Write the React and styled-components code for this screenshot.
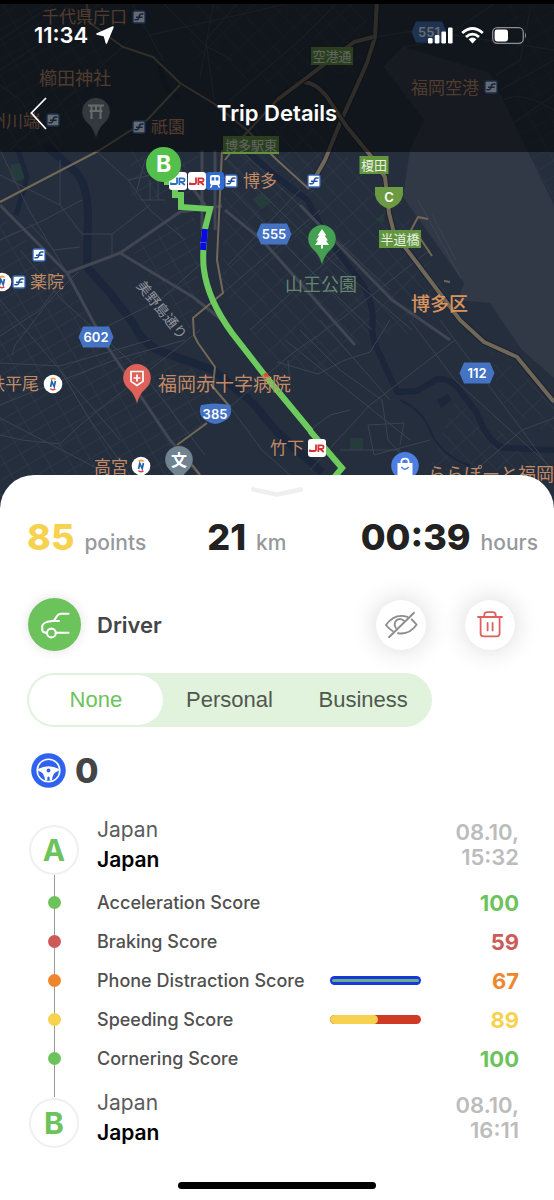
import React, { useState } from "react";
import styled, { createGlobalStyle } from "styled-components";

const colors = {
  green: "#6cc35b",
  red: "#cd5a57",
  orange: "#ef862d",
  yellow: "#f6d24f",
  blue: "#2f62ee",
  text: "#444546",
  muted: "#96999c",
  date: "#bcbcbc",
};

const mapFont = '"Noto Sans CJK JP", sans-serif';

const GlobalStyle = createGlobalStyle`
  * {
    box-sizing: border-box;
  }
  body {
    margin: 0;
    background: #fff;
    font-family: Inter, "Liberation Sans", sans-serif;
  }
  button {
    border: 0;
    padding: 0;
    background: none;
    font: inherit;
    cursor: pointer;
  }
`;

const Hero = styled.header`
  position: relative;
  height: 508px;
  overflow: hidden;
  background: #252d3b;
`;

const MapCanvas = styled.svg`
  position: absolute;
  top: 0;
  left: 0;
  width: 100%;
  height: 100%;
`;

const TopBar = styled.div`
  position: relative;
  height: 152px;
  border-top: 4px solid #000;
  background: rgba(5, 6, 9, 0.6);
  color: #fff;
`;

const StatusBar = styled.div`
  display: flex;
  align-items: center;
  height: 62px;
  padding: 0 27px 0 34px;
  gap: 8px;
  font-size: 22px;
  font-weight: 600;
`;

const StatusIcons = styled.div`
  display: flex;
  align-items: center;
  gap: 8px;
  margin-left: auto;
`;

const NavBar = styled.nav`
  display: grid;
  grid-template-columns: 48px 1fr 48px;
  align-items: center;
  height: 78px;
  margin-top: 8px;
  padding: 0 16px;
  h1 {
    margin: 0;
    font-size: 22px;
    font-weight: 600;
    text-align: center;
  }
`;

const BackButton = styled.button`
  display: flex;
  align-items: center;
  height: 48px;
  padding-left: 14px;
`;

const Sheet = styled.main`
  position: relative;
  margin-top: -33px;
  padding-top: 12px;
  border-radius: 34px 34px 0 0;
  background: #fff;
`;

const Handle = styled.svg`
  display: block;
  margin: 0 auto;
`;

const Stats = styled.div`
  display: grid;
  grid-template-columns: 181fr 154fr 176fr;
  margin-top: 18px;
  padding: 0 16px 0 27px;
  line-height: 44px;
  white-space: nowrap;
`;

const Stat = styled.div`
  color: ${(props) => props.$color || "#222"};
  font-size: 36px;
  font-weight: 800;
  span {
    margin-left: 10px;
    color: ${colors.muted};
    font-size: 21px;
    font-weight: 500;
    line-height: 20px;
  }
`;

const RoleRow = styled.section`
  display: flex;
  align-items: center;
  margin-top: 39px;
  padding: 0 39px 0 28px;
  h2 {
    flex: 1;
    margin: 0 0 0 16px;
    color: ${colors.text};
    font-size: 22px;
    font-weight: 600;
  }
`;

const RoleBadge = styled.div`
  display: flex;
  align-items: center;
  justify-content: center;
  width: 53px;
  height: 53px;
  border-radius: 50%;
  background: ${colors.green};
  box-shadow: 0 0 12px rgba(0, 0, 60, 0.12);
`;

const RoundButton = styled.button`
  display: flex;
  align-items: center;
  justify-content: center;
  width: 50px;
  height: 50px;
  border-radius: 50%;
  background: #fff;
  box-shadow: 0 0 26px rgba(0, 0, 0, 0.16);
  & + & {
    margin-left: 39px;
  }
`;

const Segments = styled.fieldset`
  display: flex;
  max-width: 405px;
  height: 54px;
  margin: 22px 27px 0;
  padding: 2px;
  border: 0;
  border-radius: 27px;
  background: #e1f2dd;
`;

const Segment = styled.label`
  display: flex;
  flex: 1;
  align-items: center;
  justify-content: center;
  border-radius: 25px;
  background: ${(props) => (props.$active ? "#fff" : "transparent")};
  color: ${(props) => (props.$active ? colors.green : "#50584e")};
  font-family: "Liberation Sans", sans-serif;
  font-size: 22px;
  cursor: pointer;
  input {
    position: absolute;
    opacity: 0;
    pointer-events: none;
  }
`;

const WheelRow = styled.div`
  display: flex;
  align-items: center;
  gap: 9px;
  height: 34px;
  margin-top: 26px;
  padding-left: 31px;
  color: ${colors.text};
  font-size: 34px;
  font-weight: 800;
`;

const Timeline = styled.section`
  position: relative;
  margin-top: 28px;
  padding: 0 35px 0 29px;
  &:before {
    content: "";
    position: absolute;
    top: 58px;
    bottom: 51px;
    left: 54px;
    width: 1px;
    background: #9a9a9a;
  }
`;

const Stop = styled.div`
  display: grid;
  grid-template-columns: 50px 1fr 80px;
  align-items: end;
  height: 60px;
`;

const StopMarker = styled.div`
  position: relative;
  display: flex;
  align-items: center;
  justify-content: center;
  width: 50px;
  height: 50px;
  border: 2px solid #f0f0f0;
  border-radius: 50%;
  color: ${colors.green};
  font-size: 30px;
  font-weight: 700;
`;

const Place = styled.div`
  padding-left: 18px;
  color: #5c5c5c;
  font-size: 21px;
  line-height: 30px;
  strong {
    display: block;
    color: #000;
    font-weight: 600;
  }
`;

const StopTime = styled.time`
  align-self: center;
  color: ${colors.date};
  font-size: 22px;
  font-weight: 600;
  line-height: 25px;
  text-align: right;
`;

const ScoreList = styled.ul`
  margin: 8px 0 10px;
  padding: 0;
  list-style: none;
`;

const Score = styled.li`
  display: grid;
  grid-template-columns: 50px 1fr 91px 98px;
  align-items: center;
  height: 39px;
  color: #505050;
  font-size: 18px;
  font-weight: 500;
`;

const Dot = styled.i`
  position: relative;
  justify-self: center;
  width: 13px;
  height: 13px;
  border-radius: 50%;
  background: ${(props) => props.$color};
`;

const ScoreName = styled.span`
  padding-left: 18px;
  white-space: nowrap;
`;

const ScoreValue = styled.b`
  grid-column: 4;
  color: ${(props) => props.$color};
  font-size: 22px;
  font-weight: 700;
  text-align: right;
`;

const PhoneBar = styled.div`
  height: 9px;
  padding: 3px 2px;
  border-radius: 5px;
  background: #1638dd;
  &:before {
    content: "";
    display: block;
    height: 3px;
    border-radius: 2px;
    background: #68ad8c;
  }
`;

const SpeedBar = styled.div`
  height: 9px;
  border-radius: 5px;
  background: #cf3a24;
  overflow: hidden;
  div {
    height: 9px;
    border-radius: 5px;
    background: ${colors.yellow};
  }
`;

const HomeIndicator = styled.div`
  width: 198px;
  height: 7px;
  margin: 34px auto 0;
  border-radius: 4px;
  background: #000;
`;

const Page = styled.div`
  padding-bottom: 11px;
`;

const LocationIcon = () => (
  <svg width="18" height="18" viewBox="0 0 18 18">
    <path d="M17 1 L10.4 17 L8.4 9.8 L1 8 Z" fill="#fff" stroke="#fff" strokeWidth="1.6" strokeLinejoin="round" />
  </svg>
);

const SignalIcon = () => (
  <svg width="25" height="17" viewBox="0 0 25 17" fill="#fff">
    <rect x="0" y="11" width="4.6" height="5.6" rx="1.3" />
    <rect x="6.8" y="8" width="4.6" height="8.6" rx="1.3" />
    <rect x="13.4" y="4.5" width="4.6" height="12.1" rx="1.3" />
    <rect x="20" y="0.5" width="4.6" height="16.1" rx="1.3" />
  </svg>
);

const WifiIcon = () => (
  <svg width="23" height="17" viewBox="0 0 23 17">
    <g fill="none" stroke="#fff" strokeWidth="2.8">
      <path d="M1.2 6 Q11.5 -3 21.8 6" />
      <path d="M5 10 Q11.5 4.2 18 10" />
    </g>
    <path d="M7.6 12.2 Q11.5 9 15.4 12.2 L11.5 16.6 Z" fill="#fff" />
  </svg>
);

const BatteryIcon = () => (
  <svg width="35" height="17" viewBox="0 0 35 17">
    <rect x="0.7" y="0.7" width="30.6" height="15.6" rx="4.5" fill="none" stroke="#8b8d91" strokeWidth="1.3" />
    <rect x="2.6" y="2.6" width="13.4" height="11.8" rx="2.4" fill="#fff" />
    <path d="M33 5.5 Q35 8.5 33 11.5 Z" fill="#8b8d91" />
  </svg>
);

const BackIcon = () => (
  <svg width="17" height="33" viewBox="0 0 17 33">
    <path d="M16 1 L1.4 16 L16 32" fill="none" stroke="#fff" strokeWidth="1.7" />
  </svg>
);

const CarIcon = () => (
  <svg width="30" height="28" viewBox="0 0 30 28" fill="none" stroke="#fff" strokeWidth="2.1" strokeLinecap="round" strokeLinejoin="round">
    <path d="M28.5 2.8 H21 Q18.4 2.8 17 5 L14 9.6" />
    <path d="M19 10 H12 C7 10.6 2.6 11.6 2.2 15.2 V18.6 Q2.4 21.4 6.6 22" />
    <circle cx="11.4" cy="22" r="4.4" />
    <path d="M16 21.8 H28.5" />
  </svg>
);

const EyeOffIcon = () => (
  <svg width="34" height="28" viewBox="0 0 34 28" fill="none" stroke="#8d8d8d" strokeWidth="1.9" strokeLinecap="round" strokeLinejoin="round">
    <path d="M23.4 5.9 C15 3.2 7.4 6.6 1.9 14 Q4.8 17.8 8.6 20" />
    <path d="M27.7 8.4 Q30.6 10.8 32.6 13.8 C27.4 20.8 21 23.6 14 22.2" />
    <path d="M11.9 17 A5.4 5.4 0 0 1 20.2 10" />
    <path d="M5 26.2 L30 1.8" />
  </svg>
);

const TrashIcon = () => (
  <svg width="26" height="27" viewBox="0 0 26 27" fill="none" stroke="#e0605f" strokeWidth="1.8" strokeLinecap="round" strokeLinejoin="round">
    <path d="M1 6 H25" />
    <path d="M7.3 6 V4.4 Q7.3 1.2 10.2 1.2 H15.8 Q18.7 1.2 18.7 4.4 V6" />
    <path d="M3.6 6.4 V22.6 Q3.6 25.4 6.4 25.4 H19.8 Q22.6 25.4 22.6 22.6 V6.4" />
    <path d="M10.6 12 V19.4 M15.6 12 V19.4" />
  </svg>
);

const WheelIcon = () => (
  <svg width="35" height="35" viewBox="-17.5 -17.5 35 35">
    <circle r="17.3" fill={colors.blue} />
    <circle r="11.3" fill="none" stroke="#fff" strokeWidth="1.6" />
    <path
      d="M-10.6 -1.6 Q-5 -4.2 0 -4.2 T10.6 -1.6 L10 .6 Q4.4 1.6 3.4 10 H-3.4 Q-4.4 1.6 -10 .6 Z"
      fill="#fff"
    />
    <path d="M-1.3 10 L-1 6.6 Q0 5.4 1 6.6 L1.3 10 Z" fill={colors.blue} />
    <circle r="1.9" fill={colors.blue} />
  </svg>
);

const minorRoads = [
  "M0 40 L60 0 M0 70 L100 4 M10 150 L130 40 M60 152 L20 100 L0 85 M130 0 L150 36 L164 62 M150 35 L260 10 L300 0",
  "M200 78 L214 0 M214 100 L206 40 L240 0 M160 0 L206 46 L232 60 M230 100 L300 40 L340 0 M384 67 L404 47 L440 40 L500 0",
  "M375 37 L420 30 L554 50 M500 90 L554 60 M496 75 L520 60 L530 10 M504 100 Q520 90 554 110 M510 125 L554 95",
  "M0 175 L60 205 L82 234 L112 234 L150 205 M112 234 L112 255 M95 150 L128 180 L150 210 L185 240 M60 160 L60 205 M0 240 L40 222 L82 200",
  "M128 180 L165 172 M137 190 L145 160 L170 150 M140 200 H165 M150 180 V200 M158 176 V200 M30 224 L54 250 L80 247",
  "M0 150 L30 212 L67 273 M67 273 L40 310 L0 336 M0 300 L60 370 L120 440 M20 250 L62 300 L140 370 L205 455",
  "M0 363 L60 366 L150 340 M12 355 L15 345 L50 300 L78 272 M0 435 L22 440 L60 444 L80 425 L200 330",
  "M0 405 L60 381 L120 358 L185 340 M0 418 L110 475 M60 370 L90 420 L130 475 M100 330 L160 300 L205 260",
  "M230 407 L262 450 L290 475 M230 407 L290 355 L340 320 L430 250 M228 265 L300 190 M223 293 L320 210 M250 330 L350 240",
  "M228 160 L330 260 L412 330 M232 190 L300 260 L372 330 M240 150 L310 215 L390 290 M285 340 L410 440",
  "M300 330 L340 370 L382 400 L388 440 L402 455 M320 320 L390 400 M410 320 L455 380 L554 470 M440 320 L522 430 L554 474",
  "M310 470 L370 405 L455 340 M522 430 L554 418 M522 430 L470 475 M277 362 L318 374 L345 360 L370 352 L390 320",
  "M310 430 L330 415 L350 410 M290 385 L288 360 M368 425 L404 423 L400 445 M368 425 L374 455 L430 440 M340 450 L400 450",
];

const majorRoads = [
  "M0 205 L67 273 L103 340 L170 440 L200 475",
  "M67 273 L120 253 L180 212 L222 206",
  "M120 253 L193 297 L222 320",
  "M165 150 L205 205 M202 150 V230 M215 150 V230",
  "M225 210 L262 240 L355 345",
  "M300 205 L392 300 L450 340",
];

const expressways = [
  "M377 0 L375 37 L367 63 L355 90 L340 123 L325 160 L312 183",
  "M277 100 L297 83 Q312 78 327 97 L347 127 L370 155 L385 177 L389 213 L394 233 L417 263 L460 320 L484 342 L517 357 L554 402",
  "M277 100 L354 42 L373 37",
];

const tanRoads = [
  "M86 0 L90 23 L123 47 L153 57 L180 83 L213 103 L247 130 L277 160 L309 189",
  "M180 85 L147 120 L100 150 L0 202",
  "M222 150 L217 260 L223 293 L193 318 L194 335 L198 343 L215 367 L213 387 L230 407",
  "M207 423 L177 445 M183 453 L200 475",
  "M410 232 L418 217 L428 219 M420 238 L432 256 M444 281 L450 282",
  "M277 100 L240 140 L225 160",
];

const placeLabels = [
  { x: 42, y: 17, text: "千代県庁口", size: 17 },
  { x: 39, y: 79, text: "櫛田神社", size: 18 },
  { x: -11, y: 121, text: "州川端", size: 17 },
  { x: 151, y: 127, text: "祇園", size: 17 },
  { x: 411, y: 88, text: "福岡空港", size: 17 },
  { x: 243, y: 181, text: "博多", size: 17 },
  { x: 30, y: 282, text: "薬院", size: 17 },
  { x: -12, y: 384, text: "鉄平尾", size: 17 },
  { x: 158, y: 385, text: "福岡赤十字病院", size: 19 },
  { x: 270, y: 448, text: "竹下", size: 17 },
  { x: 94, y: 467, text: "高宮", size: 17 },
  { x: 428, y: 475, text: "ららぽーと福岡", size: 18 },
  { x: 285, y: 285, text: "山王公園", size: 18, color: "#65856f" },
  { x: 411, y: 305, text: "博多区", size: 19, color: "#d9945e", weight: 500 },
];

const greenSigns = [
  { x: 332, y: 56, w: 42, text: "空港通" },
  { x: 251, y: 145, w: 56, text: "博多駅東" },
  { x: 374, y: 165, w: 29, text: "榎田" },
  { x: 400, y: 239, w: 42, text: "半道橋" },
];

const routeShields = [
  { x: 429, y: 32, text: "551" },
  { x: 274, y: 234, text: "555" },
  { x: 96, y: 337, text: "602" },
  { x: 477, y: 373, text: "112" },
];

const metroStops = [
  [139, 17], [53, 120], [139, 127], [491, 87],
  [231, 181], [314, 181], [39, 255], [19, 282],
];

const railStops = [[2, 282], [53, 384], [141, 466]];

const Pin = ({ x, y, color, children }) => (
  <g transform={`translate(${x} ${y})`}>
    <path
      d="M0 26 Q-2.5 16 -9 10.5 A14 14 0 1 1 9 10.5 Q2.5 16 0 26 Z"
      fill={color}
      stroke="#1f2b33"
      strokeOpacity="0.35"
    />
    {children}
  </g>
);

const JrStop = ({ x, y, color }) => (
  <g transform={`translate(${x} ${y})`}>
    <rect x="-9" y="-9" width="18" height="18" rx="3" fill="#fff" />
    <g fill="none" stroke={color} strokeWidth="1.8">
      <path d="M-7 1.5 V3 H-2.4 Q-1 3 -1 1.5 V-3.5" />
      <path d="M1.4 4 V-2.6 H5 Q6.6 -2.6 6.6 -1 T5 .8 H3 L6.8 4" />
    </g>
  </g>
);

const TripMap = () => (
  <MapCanvas viewBox="0 0 554 508" preserveAspectRatio="xMidYMin slice" role="img" aria-label="Trip route map">
    <defs>
      <pattern id="blocks" width="19" height="13" patternUnits="userSpaceOnUse" patternTransform="rotate(-30)">
        <path d="M0 0 H19 M0 0 V13" stroke="#3a4350" fill="none" />
      </pattern>
      <pattern id="blocksEast" width="14" height="22" patternUnits="userSpaceOnUse" patternTransform="rotate(-43)">
        <path d="M0 0 H14 M0 0 V22" stroke="#3a4350" fill="none" />
      </pattern>
    </defs>
    <rect width="554" height="508" fill="#252e3d" />
    <path
      d="M0 0 H80 L120 60 L60 150 H0 Z M0 215 L60 270 L100 340 L140 350 L210 375 L225 410 L180 440 L190 508 H0 Z M130 150 H200 L190 200 H130 Z M130 250 L195 215 L200 300 L190 330 Z"
      fill="url(#blocks)"
      opacity="0.7"
    />
    <path
      d="M225 130 L290 110 L400 200 L450 300 L400 340 L380 330 L330 370 L280 370 L222 290 Z M190 0 H370 L360 70 L270 90 L190 60 Z M455 400 L554 470 H430 Z M490 350 L554 400 V440 L500 400 Z"
      fill="url(#blocksEast)"
      opacity="0.7"
    />
    <path d="M500 0 H554 V200 L525 150 Z" fill="url(#blocks)" opacity="0.5" />
    <path
      d="M404 47 L384 67 L424 120 L410 150 L403 197 L464 283 L458 300 L490 303 L522 350 L554 378 V205 L527 150 L490 73 Z"
      fill="#323946"
    />
    <path d="M418 200 L461 278 M432 215 L456 260" stroke="#3d4552" fill="none" />
    <path d="M10 165 L24 162 L27 178 L12 183 Z M252 200 L262 192 L272 202 L262 209 Z M350 438 H363 V450 H350 Z M375 220 L384 213 L384 222 Z" fill="#263b3b" />
    <path d="M437 400 L448 394 L452 400 L441 408 Z" fill="#1e2739" />
    <g fill="none" stroke="#1c263a" strokeLinejoin="round">
      <path d="M45 145 L76 172 Q88 186 88 217 L87 267 L110 293 L133 323 Q140 340 157 350 L213 370 L253 403 L277 432 L297 450 L322 472" strokeWidth="8" />
      <path d="M240 145 L277 177 L307 200 L327 237 L357 277 Q376 300 372 330 L374 342 L397 392 L417 391 L437 379 Q450 378 458 388 L477 413 Q488 444 505 448 L554 450" strokeWidth="6" />
      <path d="M18 150 L27 177 L16 215 M160 62 Q162 90 180 98" strokeWidth="5" />
      <path d="M400 400 Q422 410 430 430 Q440 455 470 466" strokeWidth="2" />
    </g>
    <g fill="none" stroke="#3a4350">
      {minorRoads.map((d) => (
        <path key={d} d={d} />
      ))}
    </g>
    <g fill="none" stroke="#414752" strokeWidth="3" strokeLinejoin="round">
      {majorRoads.map((d) => (
        <path key={d} d={d} />
      ))}
    </g>
    <g fill="none" stroke="#736858" strokeWidth="2" strokeLinejoin="round">
      {tanRoads.map((d) => (
        <path key={d} d={d} />
      ))}
    </g>
    {expressways.map((d) => (
      <g key={d} fill="none" strokeLinejoin="round">
        <path d={d} stroke="#1d222b" strokeWidth="6" />
        <path d={d} stroke="#6f675a" strokeWidth="4" />
      </g>
    ))}

    <g fill="none" strokeWidth="6">
      <path
        d="M164 182 H175 V195 H181 V207 L210 209 L205 229 Q202 258 204 270 Q208 300 232 333 L267 378 L310 430 L311 432 L342 468 L332 480"
        stroke="#6ccb5c"
      />
      <path d="M205 229 L203 250" stroke="#0a0ae6" />
      <path d="M203 242 L203 243" stroke="#3f55e8" />
      <path d="M264 374 L267 378" stroke="#d4503a" />
    </g>

    <g fontFamily={mapFont}>
      {placeLabels.map((label) => (
        <text
          key={label.text}
          x={label.x}
          y={label.y + 6}
          fontSize={label.size}
          fontWeight={label.weight || 400}
          fill={label.color || "#c08a65"}
        >
          {label.text}
        </text>
      ))}
      <text transform="translate(136 286) rotate(51)" fontSize="14" fill="#8f949c">
        美野島通り
      </text>
      {greenSigns.map((sign) => (
        <g key={sign.text}>
          <rect x={sign.x - sign.w / 2} y={sign.y - 9} width={sign.w} height="18" fill="#63953f" />
          <text x={sign.x} y={sign.y + 5} fontSize="13" fill="#e9f0e4" textAnchor="middle">
            {sign.text}
          </text>
        </g>
      ))}
    </g>

    <path d="M375 187 H403 V195 Q401 205 389 209 Q377 205 375 195 Z" fill="#6c9a43" />
    <g fontFamily="Inter, sans-serif" fontSize="13" fontWeight="600" fill="#fff" textAnchor="middle">
      <text x="389" y="202">C</text>
      {routeShields.map((shield) => (
        <g key={shield.text} transform={`translate(${shield.x} ${shield.y})`}>
          <path d="M-13 -10.5 H13 L17.5 0 L13 10.5 H-13 L-17.5 0 Z" fill="#4473c4" />
          <text y="5">{shield.text}</text>
        </g>
      ))}
      <path d="M201 405 Q215 402 230 405 Q234 416 224 421 Q215 427 207 421 Q197 416 201 405 Z" fill="#4473c4" />
      <text x="215" y="419">385</text>
    </g>

    {metroStops.map(([x, y]) => (
      <g key={`${x}-${y}`} transform={`translate(${x} ${y})`}>
        <rect x="-6" y="-6" width="12" height="12" rx="1.5" fill="#fff" stroke="#3767b5" strokeWidth="1.3" />
        <path d="M-4.6 2.8 H-2 Q-.4 2.8 0 0 T2.4 -3 H4.6 M-3 .2 H3.6" fill="none" stroke="#23529f" strokeWidth="1.5" />
      </g>
    ))}
    {railStops.map(([x, y]) => (
      <g key={`${x}-${y}`} transform={`translate(${x} ${y})`} fill="none">
        <circle r="9.3" fill="#fff" />
        <path d="M-2.4 3 L-1.2 -2.6 L1.2 2.6 L2.4 -3" stroke="#2462aa" strokeWidth="1.7" />
        <path d="M-2.4 -4.8 Q1 -6.6 2.6 -4.4" stroke="#eb9a3c" strokeWidth="1.5" />
        <path d="M-2.6 4.6 Q-1 6.6 2.4 5" stroke="#d9423b" strokeWidth="1.5" />
      </g>
    ))}

    <Pin x={96} y={112} color="#7a8591">
      <path d="M-8 -6.5 H8 M-6.5 -1 H6.5 M-4.5 -6 V7 M4.5 -6 V7 M0 -6 V-1" stroke="#fff" strokeWidth="2" />
    </Pin>
    <Pin x={322} y={239} color="#46a052">
      <path d="M0 -10 L4.4 -3.6 H2.6 L6 1.6 H4 L7 6 H1 V9.5 H-1 V6 H-7 L-4 1.6 H-6 L-2.6 -3.6 H-4.4 Z" fill="#fff" />
    </Pin>
    <Pin x={137} y={378} color="#df625a">
      <path d="M-6 -6.5 H6 V3.4 L0 7.4 L-6 3.4 Z M0 -3.4 V3.4 M-3.4 0 H3.4" fill="none" stroke="#fff" strokeWidth="1.7" />
    </Pin>
    <Pin x={179} y={460} color="#718391">
      <text y="6" fontFamily={mapFont} fontSize="16" fontWeight="700" fill="#fff" textAnchor="middle">
        文
      </text>
    </Pin>
    <Pin x={405} y={466} color="#4d7fe2">
      <path d="M-7.5 -3 H7.5 V10 H-7.5 Z" fill="#fff" />
      <path d="M-3.6 -2 V-4 Q-3.6 -7.4 0 -7.4 T3.6 -4 V-2" fill="none" stroke="#fff" strokeWidth="1.8" />
      <path d="M-3.6 1 Q0 5.4 3.6 1" fill="none" stroke="#4d7fe2" strokeWidth="1.6" />
    </Pin>

    <JrStop x={178} y={181} color="#2a6fc0" />
    <JrStop x={197} y={181} color="#d62f35" />
    <JrStop x={317} y={448} color="#d62f35" />
    <g transform="translate(215 181)">
      <rect x="-9" y="-9" width="18" height="18" rx="3" fill="#2f6bd0" />
      <rect x="-5" y="-6" width="10" height="10" rx="2" fill="#fff" />
      <path d="M-3.4 -3.8 H-.7 V-.6 H-3.4 Z M.7 -3.8 H3.4 V-.6 H.7 Z" fill="#2f6bd0" />
      <path d="M-3 4 L-4.6 6.6 M3 4 L4.6 6.6" stroke="#fff" strokeWidth="1.5" />
    </g>
  </MapCanvas>
);

const DestinationBadge = styled.div`
  position: absolute;
  top: 147px;
  left: calc(50% - 131px);
  width: 35px;
  height: 35px;
  border-radius: 50%;
  background: #53c04b;
  color: #fff;
  font-size: 23px;
  font-weight: 700;
  line-height: 35px;
  text-align: center;
`;

const scores = [
  { name: "Acceleration Score", value: 100, color: colors.green },
  { name: "Braking Score", value: 59, color: colors.red },
  { name: "Phone Distraction Score", value: 67, color: colors.orange, bar: "phone" },
  { name: "Speeding Score", value: 89, color: colors.yellow, bar: "speed", share: 53 },
  { name: "Cornering Score", value: 100, color: colors.green },
];

const TripStop = ({ letter, time }) => (
  <Stop>
    <StopMarker>{letter}</StopMarker>
    <Place>
      Japan
      <strong>Japan</strong>
    </Place>
    <StopTime>
      08.10,
      <br />
      {time}
    </StopTime>
  </Stop>
);

const App = () => {
  const [purpose, setPurpose] = useState("None");

  return (
    <Page>
      <GlobalStyle />
      <Hero>
        <TripMap />
        <TopBar>
          <StatusBar>
            <span>11:34</span>
            <LocationIcon />
            <StatusIcons>
              <SignalIcon />
              <WifiIcon />
              <BatteryIcon />
            </StatusIcons>
          </StatusBar>
          <NavBar>
            <BackButton aria-label="Back">
              <BackIcon />
            </BackButton>
            <h1>Trip Details</h1>
          </NavBar>
        </TopBar>
        <DestinationBadge>B</DestinationBadge>
      </Hero>

      <Sheet>
        <Handle width="54" height="10" viewBox="0 0 54 10">
          <path d="M3 2.5 L27 7.5 L51 2.5" fill="none" stroke="#efefef" strokeWidth="4.4" strokeLinecap="round" strokeLinejoin="round" />
        </Handle>
        <Stats>
          <Stat $color={colors.yellow}>
            85<span>points</span>
          </Stat>
          <Stat>
            21<span>km</span>
          </Stat>
          <Stat>
            00:39<span>hours</span>
          </Stat>
        </Stats>

        <RoleRow>
          <RoleBadge>
            <CarIcon />
          </RoleBadge>
          <h2>Driver</h2>
          <RoundButton aria-label="Hide trip">
            <EyeOffIcon />
          </RoundButton>
          <RoundButton aria-label="Delete trip">
            <TrashIcon />
          </RoundButton>
        </RoleRow>

        <Segments aria-label="Trip purpose">
          {["None", "Personal", "Business"].map((option) => (
            <Segment key={option} $active={purpose === option}>
              <input
                type="radio"
                name="purpose"
                value={option}
                checked={purpose === option}
                onChange={() => setPurpose(option)}
              />
              {option}
            </Segment>
          ))}
        </Segments>

        <WheelRow>
          <WheelIcon />
          <span>0</span>
        </WheelRow>

        <Timeline>
          <TripStop letter="A" time="15:32" />
          <ScoreList>
            {scores.map((score) => (
              <Score key={score.name}>
                <Dot $color={score.color} />
                <ScoreName>{score.name}</ScoreName>
                {score.bar === "phone" && <PhoneBar />}
                {score.bar === "speed" && (
                  <SpeedBar>
                    <div style={{ width: `${score.share}%` }} />
                  </SpeedBar>
                )}
                <ScoreValue $color={score.color}>{score.value}</ScoreValue>
              </Score>
            ))}
          </ScoreList>
          <TripStop letter="B" time="16:11" />
        </Timeline>
        <HomeIndicator />
      </Sheet>
    </Page>
  );
};

export default App;
